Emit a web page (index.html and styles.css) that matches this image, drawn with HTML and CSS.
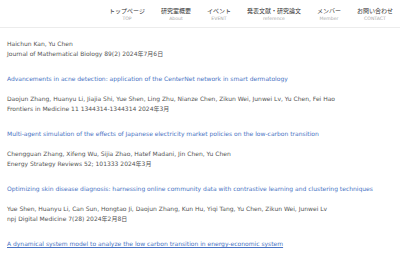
FILE: index.html
```html
<!DOCTYPE html>
<html lang="ja">
<head>
<meta charset="utf-8">
<title>Publications</title>
<link rel="stylesheet" href="styles.css">
</head>
<body>
<header class="site-header">
  <nav class="nav">
    <a class="nav-item" href="#"><span class="nav-jp">トップページ</span><span class="nav-en">TOP</span></a>
    <a class="nav-item" href="#"><span class="nav-jp">研究室概要</span><span class="nav-en">About</span></a>
    <a class="nav-item" href="#"><span class="nav-jp">イベント</span><span class="nav-en">EVENT</span></a>
    <a class="nav-item" href="#"><span class="nav-jp">発表文献・研究論文</span><span class="nav-en">reference</span></a>
    <a class="nav-item" href="#"><span class="nav-jp">メンバー</span><span class="nav-en">Member</span></a>
    <a class="nav-item" href="#"><span class="nav-jp">お問い合わせ</span><span class="nav-en">CONTACT</span></a>
  </nav>
</header>
<main class="pubs">
  <div class="pub">
    <a class="pub-title" href="#">Stability analysis of a delayed epidemic model with spatial diffusion and nonlinear incidence</a>
    <p class="pub-authors">Haichun Kan, Yu Chen</p>
    <p class="pub-journal">Journal of Mathematical Biology 89(2) 2024年7月6日</p>
  </div>
  <div class="pub">
    <a class="pub-title" href="#">Advancements in acne detection: application of the CenterNet network in smart dermatology</a>
    <p class="pub-authors">Daojun Zhang, Huanyu Li, Jiajia Shi, Yue Shen, Ling Zhu, Nianze Chen, Zikun Wei, Junwei Lv, Yu Chen, Fei Hao</p>
    <p class="pub-journal">Frontiers in Medicine 11 1344314-1344314 2024年3月</p>
  </div>
  <div class="pub">
    <a class="pub-title" href="#">Multi-agent simulation of the effects of Japanese electricity market policies on the low-carbon transition</a>
    <p class="pub-authors">Chengguan Zhang, Xifeng Wu, Sijia Zhao, Hatef Madani, Jin Chen, Yu Chen</p>
    <p class="pub-journal">Energy Strategy Reviews 52; 101333 2024年3月</p>
  </div>
  <div class="pub">
    <a class="pub-title" href="#">Optimizing skin disease diagnosis: harnessing online community data with contrastive learning and clustering techniques</a>
    <p class="pub-authors">Yue Shen, Huanyu Li, Can Sun, Hongtao Ji, Daojun Zhang, Kun Hu, Yiqi Tang, Yu Chen, Zikun Wei, Junwei Lv</p>
    <p class="pub-journal">npj Digital Medicine 7(28) 2024年2月8日</p>
  </div>
  <div class="pub">
    <a class="pub-title is-hover" href="#">A dynamical system model to analyze the low carbon transition in energy-economic system</a>
  </div>
</main>
</body>
</html>
```
FILE: styles.css
```css
html, body {
  margin: 0;
  padding: 0;
  background: #ffffff;
}
body {
  font-family: "DejaVu Sans", "Noto Sans CJK JP", sans-serif;
  color: #555555;
  overflow: hidden;
}
.site-header {
  position: fixed;
  top: 0;
  left: 0;
  right: 0;
  height: 27px;
  background: #ffffff;
  border-bottom: 1px solid #ececec;
  z-index: 10;
}
.nav {
  display: flex;
  justify-content: flex-end;
  gap: 16px;
  padding: 7px 7px 0 0;
}
.nav-item {
  display: flex;
  flex-direction: column;
  align-items: center;
  text-decoration: none;
}
.nav-jp {
  font-family: "Noto Sans CJK JP", sans-serif;
  font-size: 6px;
  line-height: 8px;
  color: #333333;
}
.nav-en {
  font-family: "DejaVu Sans", sans-serif;
  font-size: 4.6px;
  line-height: 7px;
  color: #a8a8a8;
}
.pubs {
  padding: 19px 7px 0 7px;
}
.pub {
  margin-bottom: 15px;
}
.pub-title {
  display: block;
  font-size: 6px;
  line-height: 10px;
  color: #4a74c4;
  text-decoration: none;
  white-space: nowrap;
  margin-bottom: 10px;
}
.pub-title.is-hover {
  text-decoration: underline;
}
.pub-authors,
.pub-journal {
  margin: 0;
  font-size: 6px;
  line-height: 10px;
  white-space: nowrap;
}
```
